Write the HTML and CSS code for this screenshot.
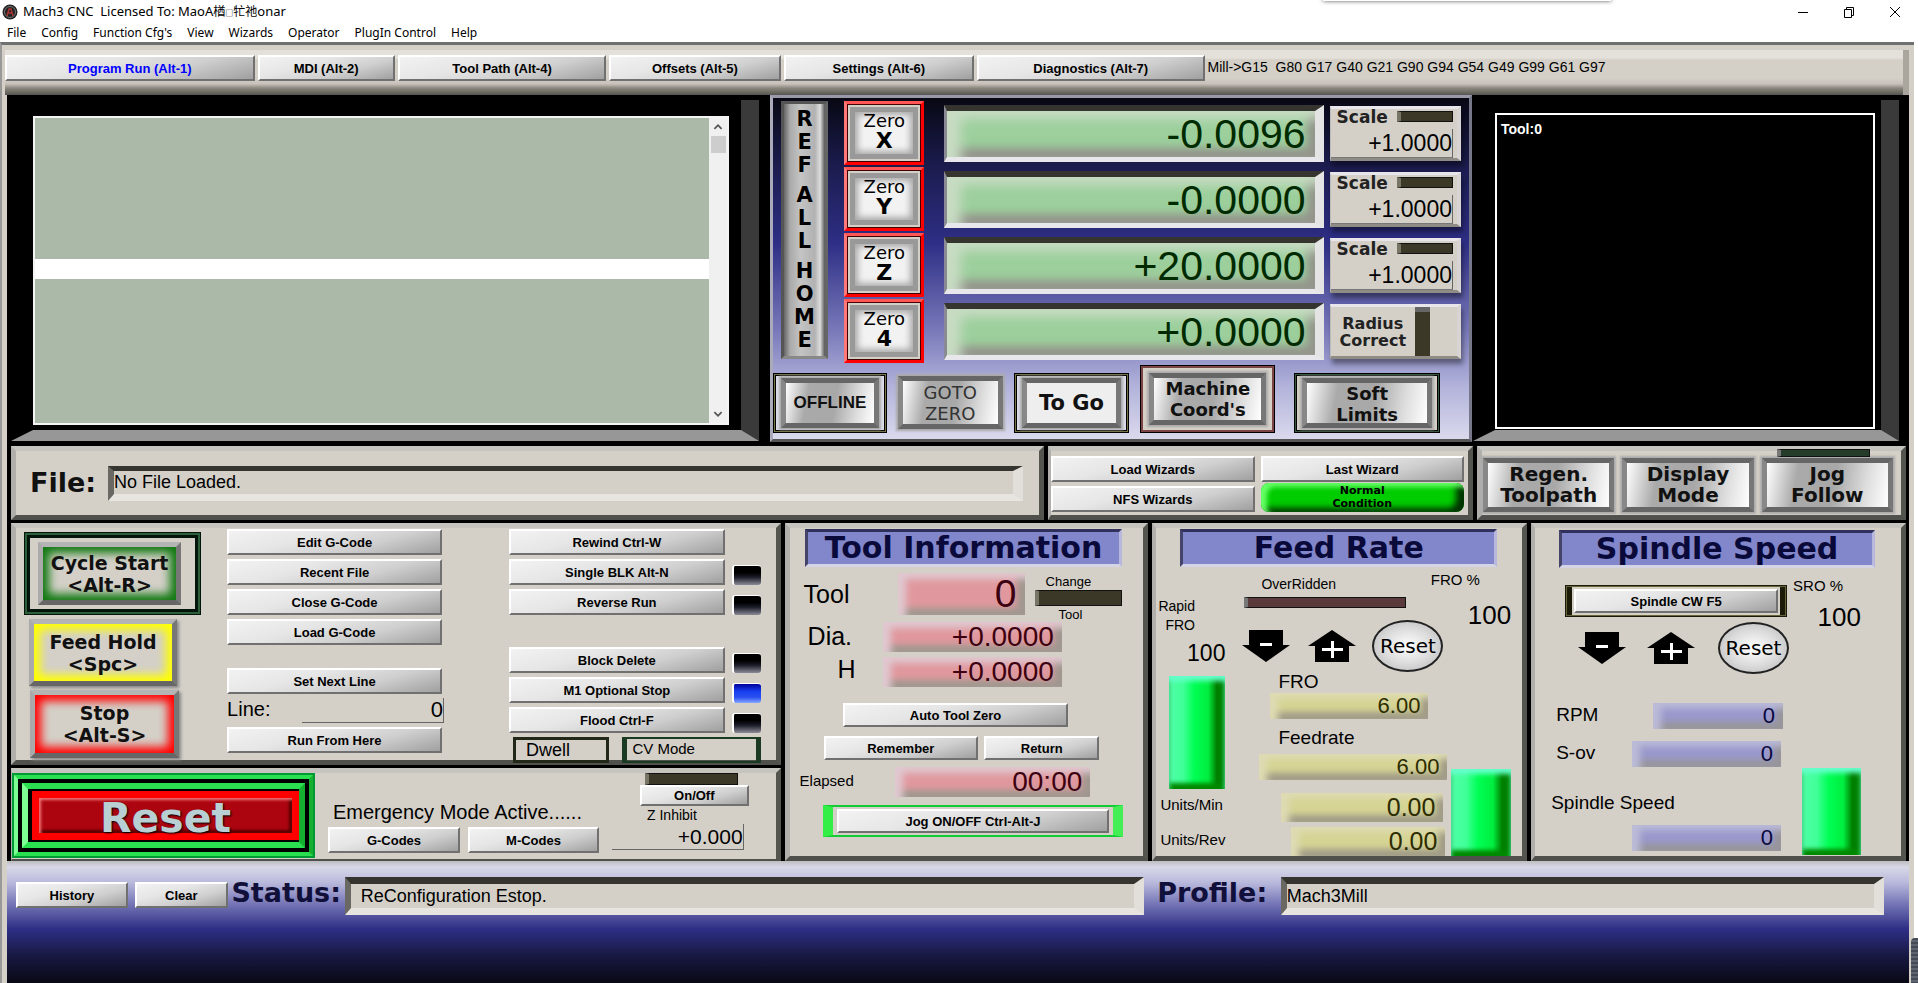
FILE: index.html
```html
<!DOCTYPE html>
<html lang="en">
<head>
<meta charset="utf-8">
<title>Mach3 CNC</title>
<link rel="stylesheet" href="styles.css">
</head>
<body>
<header class="titlebar">
  <svg class="app-icon" viewBox="0 0 16 16" aria-hidden="true"><circle cx="8" cy="8" r="7.500" fill="#222"/><circle cx="8" cy="8" r="5.500" fill="none" stroke="#777" stroke-width="1"/><path d="M5 12 7 5h2l2 7M6 9h4" fill="none" stroke="#a33" stroke-width="1.500"/></svg>
  <h1 class="app-title">Mach3 CNC&nbsp; Licensed To: MaoA<span class="owner">楢<small>□</small>牤祂</span>onar</h1>
  <span class="drop-shade"></span>
  <div class="window-buttons">
    <button class="win" aria-label="Minimize"><svg viewBox="0 0 12 12"><path d="M1 6.500h10"/></svg></button>
    <button class="win" aria-label="Restore"><svg viewBox="0 0 12 12"><path d="M1.500 3.500h7v8h-7zM3.500 3.500v-2h7v8h-2"/></svg></button>
    <button class="win" aria-label="Close"><svg viewBox="0 0 12 12"><path d="M1 1l10 10M11 1 1 11"/></svg></button>
  </div>
</header>
<nav class="menubar">
  <button>File</button><button>Config</button><button>Function Cfg's</button><button>View</button><button>Wizards</button><button>Operator</button><button>PlugIn Control</button><button>Help</button>
</nav>

<main class="client">
  <div class="tabs">
    <button class="btn tab t1 active">Program Run (Alt-1)</button>
    <button class="btn tab t2">MDI (Alt-2)</button>
    <button class="btn tab t3">Tool Path (Alt-4)</button>
    <button class="btn tab t4">Offsets (Alt-5)</button>
    <button class="btn tab t5">Settings (Alt-6)</button>
    <button class="btn tab t6">Diagnostics (Alt-7)</button>
    <span class="modes">Mill-&gt;G15&nbsp; G80 G17 G40 G21 G90 G94 G54 G49 G99 G61 G97</span>
  </div>

  <section class="upper">
    <div class="bezel code-bezel">
      <div class="code">
        <div class="listing"><div class="current-line"></div></div>
        <div class="scrollbar">
          <svg viewBox="0 0 16 20"><path d="M4 12l4-4 4 4"/></svg>
          <span class="thumb"></span>
          <svg class="down" viewBox="0 0 16 20"><path d="M4 8l4 4 4-4"/></svg>
        </div>
      </div>
    </div>

    <div class="axes">
      <div class="axis-grid">
        <button class="ref" aria-label="Ref all home"><span>R</span><span>E</span><span>F</span><span class="word">A</span><span>L</span><span>L</span><span class="word">H</span><span>O</span><span>M</span><span>E</span></button>
        <button class="zero r1">Zero<b>X</b></button>
        <button class="zero r2">Zero<b>Y</b></button>
        <button class="zero r3">Zero<b>Z</b></button>
        <button class="zero r4">Zero<b>4</b></button>
        <input class="dro axis r1" aria-label="X position" value="-0.0096">
        <input class="dro axis r2" aria-label="Y position" value="-0.0000">
        <input class="dro axis r3" aria-label="Z position" value="+20.0000">
        <input class="dro axis r4" aria-label="A position" value="+0.0000">
        <div class="scale r1"><label for="sx">Scale</label><span class="led-bar"></span><input id="sx" value="+1.0000"></div>
        <div class="scale r2"><label for="sy">Scale</label><span class="led-bar"></span><input id="sy" value="+1.0000"></div>
        <div class="scale r3"><label for="sz">Scale</label><span class="led-bar"></span><input id="sz" value="+1.0000"></div>
        <div class="radius r4"><span>Radius<br>Correct</span><span class="led-tall"></span></div>
      </div>
      <div class="axis-buttons">
        <div class="ring olive"><button class="chrome offline">OFFLINE</button></div>
        <button class="chrome goto">GOTO<br>ZERO</button>
        <div class="ring olive"><button class="chrome togo">To Go</button></div>
        <div class="ring brown"><button class="chrome">Machine<br>Coord's</button></div>
        <div class="ring green"><button class="chrome">Soft<br>Limits</button></div>
      </div>
    </div>

    <div class="bezel path-bezel"><div class="toolpath">Tool:0</div></div>
  </section>

  <section class="middle">
    <div class="panel file-panel"><label class="wide-label file-label" for="file">File:</label><input id="file" class="sunken" value="No File Loaded."></div>
    <div class="panel wizards">
      <button class="btn">Load Wizards</button><button class="btn">Last Wizard</button>
      <button class="btn">NFS Wizards</button><div class="condition">Normal<br>Condition</div>
    </div>
    <div class="panel view-panel">
      <button class="chrome">Regen.<br>Toolpath</button><button class="chrome">Display<br>Mode</button><button class="chrome">Jog<br>Follow</button>
      <span class="follow-led"></span>
    </div>
  </section>

  <section class="lower">
    <div class="left-stack">
      <div class="panel run-panel">
        <div class="run-buttons">
          <div class="cycle-ring"><button class="glow cycle">Cycle Start<br>&lt;Alt-R&gt;</button></div>
          <button class="glow hold">Feed Hold<br>&lt;Spc&gt;</button>
          <button class="glow stop">Stop<br>&lt;Alt-S&gt;</button>
        </div>
        <div class="file-buttons">
          <button class="btn">Edit G-Code</button>
          <button class="btn">Recent File</button>
          <button class="btn">Close G-Code</button>
          <button class="btn">Load G-Code</button>
          <button class="btn next">Set Next Line</button>
          <div class="line-row"><label for="line">Line:</label><input id="line" class="plain" value="0"></div>
          <button class="btn">Run From Here</button>
        </div>
        <div class="mode-buttons">
          <button class="btn">Rewind Ctrl-W</button>
          <button class="btn">Single BLK Alt-N</button><span class="led"></span>
          <button class="btn">Reverse Run</button><span class="led"></span>
          <button class="btn block">Block Delete</button><span class="led block"></span>
          <button class="btn">M1 Optional Stop</button><span class="led on"></span>
          <button class="btn">Flood Ctrl-F</button><span class="led"></span>
          <div class="mode-flags"><span class="flag dwell">Dwell</span><span class="flag cv">CV Mode</span></div>
        </div>
      </div>
      <div class="panel reset-panel">
        <div class="reset-outer"><div class="reset-inner"><button class="reset">Reset</button></div></div>
        <div class="emergency">
          <p>Emergency Mode Active......</p>
          <div class="codes"><button class="btn">G-Codes</button><button class="btn">M-Codes</button></div>
        </div>
        <div class="inhibit">
          <span class="led-bar"></span>
          <button class="btn">On/Off</button>
          <label for="zin">Z Inhibit</label>
          <input id="zin" class="plain" value="+0.000">
        </div>
      </div>
    </div>

    <div class="panel tool-panel">
      <h2 class="banner">Tool Information</h2>
      <div class="tool-row"><label for="tool">Tool</label><input id="tool" class="dro red big" value="0"><div class="change">Change<span class="led-bar"></span><span>Tool</span></div></div>
      <div class="size-row"><label for="dia">Dia.</label><input id="dia" class="dro red" value="+0.0000"></div>
      <div class="size-row h-row"><label for="hh">H</label><input id="hh" class="dro red" value="+0.0000"></div>
      <button class="btn auto-zero">Auto Tool Zero</button>
      <div class="remember-row"><button class="btn">Remember</button><button class="btn">Return</button></div>
      <div class="elapsed-row"><label for="elapsed">Elapsed</label><input id="elapsed" class="dro red" value="00:00"></div>
      <div class="jog-ring"><button class="btn">Jog ON/OFF Ctrl-Alt-J</button></div>
    </div>

    <div class="panel feed-panel">
      <h2 class="banner">Feed Rate</h2>
      <div class="feed-body">
        <div class="rapid">
          <p class="small">Rapid<br><span>FRO</span></p>
          <p class="percent">100</p>
          <div class="level tall"></div>
          <label class="unit" for="umin">Units/Min</label>
          <label class="unit rev" for="urev">Units/Rev</label>
        </div>
        <div class="feed-main">
          <p class="over">OverRidden</p>
          <span class="over-led"></span>
          <div class="adjust">
            <button class="arrow" aria-label="Decrease feed rate"><svg viewBox="0 0 48 34"><path d="M7 1h34v15h7L24 33 0 16h7z"/><path class="sign" d="M18 14h12v3H18z"/></svg></button>
            <button class="arrow" aria-label="Increase feed rate"><svg viewBox="0 0 48 34"><path d="M24 1 48 17h-7v16H7V17H0z"/><path class="sign" d="M14 19h9v-7h3v7h9v3h-9v7h-3v-7h-9z"/></svg></button>
            <button class="round">Reset</button>
          </div>
          <label class="fro" for="fro">FRO</label>
          <input id="fro" class="dro yellow fro-value" value="6.00">
          <label class="feedrate" for="feedrate">Feedrate</label>
          <input id="feedrate" class="dro yellow rate-value" value="6.00">
          <input id="umin" class="dro yellow min-value" value="0.00">
          <input id="urev" class="dro yellow rev-value" value="0.00">
        </div>
        <div class="override">
          <p class="small">FRO %</p><p class="hundred">100</p><div class="level"></div>
        </div>
      </div>
    </div>

    <div class="panel spindle-panel">
      <h2 class="banner">Spindle Speed</h2>
      <div class="spindle-body">
        <div class="spindle-main">
          <div class="spindle-ring"><button class="btn">Spindle CW F5</button></div>
          <div class="adjust">
            <button class="arrow" aria-label="Decrease spindle speed"><svg viewBox="0 0 48 34"><path d="M7 1h34v15h7L24 33 0 16h7z"/><path class="sign" d="M18 14h12v3H18z"/></svg></button>
            <button class="arrow" aria-label="Increase spindle speed"><svg viewBox="0 0 48 34"><path d="M24 1 48 17h-7v16H7V17H0z"/><path class="sign" d="M14 19h9v-7h3v7h9v3h-9v7h-3v-7h-9z"/></svg></button>
            <button class="round">Reset</button>
          </div>
          <div class="speed-row rpm"><label for="rpm">RPM</label><input id="rpm" class="dro blue" value="0"></div>
          <div class="speed-row"><label for="sov">S-ov</label><input id="sov" class="dro blue" value="0"></div>
          <label class="speed-label" for="speed">Spindle Speed</label>
          <div class="speed-row last"><input id="speed" class="dro blue" value="0"></div>
        </div>
        <div class="override">
          <p class="small">SRO %</p><p class="hundred">100</p><div class="level"></div>
        </div>
      </div>
    </div>
  </section>

  <footer class="status">
    <button class="btn history">History</button>
    <button class="btn clear">Clear</button>
    <label class="wide-label" for="status">Status:</label>
    <input id="status" class="sunken status-field" value="ReConfiguration Estop.">
    <label class="wide-label profile-label" for="profile">Profile:</label>
    <input id="profile" class="sunken profile-field" value="Mach3Mill">
  </footer>
</main>
<span class="edge-meter"></span>
</body>
</html>
```
FILE: styles.css
```css
* { box-sizing: border-box; }
body {
  margin: 0;
  min-height: 100vh;
  display: flex;
  flex-direction: column;
  background: #fff;
  color: #000;
  font-family: "Liberation Sans", "Noto Sans CJK SC", sans-serif;
}
button, input { font-family: inherit; color: inherit; margin: 0; padding: 0; min-width: 0; border-radius: 0; }
button { border: 0; background: none; white-space: nowrap; }
p, h1, h2 { margin: 0; font-weight: normal; white-space: nowrap; }
label { white-space: nowrap; }

/* window chrome */
.titlebar { display: flex; align-items: center; height: 23px; padding-left: 2px; position: relative; }
.app-icon { width: 16px; height: 16px; margin-right: 5px; }
.app-title { font: 13px/20px "Noto Sans", "Noto Sans CJK SC", sans-serif; }
.owner { font-size: 12px; }
.owner small { font-size: 8px; font-weight: bold; }
.drop-shade { position: absolute; top: -3px; left: 69%; width: 15%; height: 4px; box-shadow: 0 0 4px #555; }
.window-buttons { display: flex; margin-left: auto; }
.win { width: 46px; height: 20px; }
.win svg { width: 12px; height: 12px; fill: none; stroke: #000; stroke-width: 1; display: block; margin: auto; }
.menubar { display: flex; gap: 15px; height: 18px; padding-left: 7px; }
.menubar button { font: 12px/20px "Noto Sans", sans-serif; }
.edge-meter { position: fixed; right: 0; bottom: 0; width: 7px; height: 45px; border-radius: 4px 0 0 0; background: repeating-linear-gradient(#444b55 0 2px, #5c6570 2px 4px); }

.client {
  flex: 1;
  display: flex;
  flex-direction: column;
  margin-top: 1px;
  margin-right: 4px;
  border-left: 2px solid #999;
  border-top: 3px solid #6e7070;
  padding: 5px 5px 0 5px;
  background: #d4d0c8;
}

/* plain push button */
.btn {
  height: 26px;
  font-size: 13px;
  font-weight: bold;
  background: linear-gradient(165deg, #f2f2f2 0%, #e6e6e6 35%, #cfcfcf 65%, #a0a0a0 100%);
  border: 2px solid;
  border-color: #fff #707070 #707070 #fff;
}
.tabs {
  display: flex;
  align-items: flex-start;
  height: 45px;
  margin-left: -2px;
  padding-top: 5px;
  background: linear-gradient(#e4e0da 0, #e4e0da 8px, #d4d0c8 10px, #d4d0c8 28px, #c8c0ba 34px, #8c8880 38px, #66645c 43px, #555 45px);
  border-right: 6px solid #aaa69e;
}
.tab { margin-right: 3px; flex-basis: 0; }
.t1 { flex-grow: 245; } .t2 { flex-grow: 133; } .t3 { flex-grow: 204; }
.t4 { flex-grow: 167; } .t5 { flex-grow: 186; } .t6 { flex-grow: 223; }
.active { color: #00f; }
.modes { flex: 694 1 0; font-size: 14px; line-height: 24px; white-space: pre; }

/* displays and axes */
.upper { display: grid; grid-template-columns: 763fr 702fr 437fr; min-height: 350px; background: #000; }
.bezel {
  display: flex;
  margin: 5px 11px 4px 4px;
  border: solid;
  border-width: 0 18px 11px 22px;
  border-color: #000 #3a3a3a #979797 #000;
}
.code { flex: 1; display: flex; border: 2px solid #f4f4f4; margin: 16px 12px 5px 0; }
.listing { flex: 1; background: #abbaa8; padding-top: 141px; }
.current-line { height: 20px; background: #fff; }
.scrollbar { width: 18px; background: #f0f0f0; display: flex; flex-direction: column; align-items: center; }
.scrollbar svg { width: 16px; height: 18px; fill: none; stroke: #555; stroke-width: 2; }
.thumb { width: 15px; height: 17px; background: #cdcdcd; }
.down { margin-top: auto; }
.path-bezel { margin-right: 10px; margin-left: 1px; }
.toolpath { flex: 1; margin: 13px 6px 1px 0; border: 2px solid #fff; color: #fff; font-weight: bold; font-size: 14px; line-height: 18px; padding: 5px 4px; }

.axes {
  display: flex;
  flex-direction: column;
  margin-bottom: 3px;
  padding-left: 8px;
  border: 3px solid #777;
  border-color: #99a #77778a #555 #aab;
  background: linear-gradient(#080814 0, #1c1c50 70px, #2e2e86 145px, #7676b8 230px, #b4b4dc 290px, #dcdcee 345px);
}
.axis-grid {
  display: grid;
  grid-template-columns: 47fr 16fr 80fr 20fr 378fr 6fr 131fr 8fr;
  grid-template-rows: repeat(4, 66px);
  padding-top: 3px;
}
.r1 { grid-row: 1; } .r2 { grid-row: 2; } .r3 { grid-row: 3; } .r4 { grid-row: 4; }
.ref {
  grid-row: 1 / 5;
  height: 258px;
  display: flex;
  flex-direction: column;
  align-items: center;
  justify-content: center;
  font: bold 21px/23px "DejaVu Sans", sans-serif;
  background: linear-gradient(90deg, #666, #aaa 15%, #c4c4c4 40%, #b2b2b2 75%, #ddd 88%, #555);
  border: 3px solid #666;
  border-color: #555 #666 #888 #555;
}
.ref .word { margin-top: 7px; }
.zero {
  grid-column: 3;
  height: 64px;
  font: 18px/18px "DejaVu Sans", sans-serif;
  padding-bottom: 3px;
  border: 3px solid #f00;
  border-top-color: #f55;
  border-left-color: #f77;
  outline: 1px solid #400;
  outline-offset: -4px;
  background: #f2f2f2;
  box-shadow: inset 0 0 0 3px #d4d0c8, inset 0 0 0 8px #999, inset 0 0 6px 11px #aaa;
}
.zero b { display: block; font-size: 22px; line-height: 22px; }

.dro {
  width: 100%;
  text-align: right;
  border: 0;
  padding-right: 8px;
  font-size: 24px;
}
.axis {
  grid-column: 5;
  height: 57px;
  margin-top: 4px;
  font-size: 41px;
  color: #002a00;
  padding-right: 9px;
  border: solid;
  border-width: 6px 9px 5px 3px;
  border-color: #35342f #e4e4e4 #e8e8ec #8a8a94;
  background: #9ccf9c;
  box-shadow: inset 14px 8px 12px #c8dcc4, inset -8px -9px 8px #94948c;
}
.scale, .radius {
  grid-column: 7;
  height: 55px;
  margin-top: 5px;
  background: #d4d0c8;
  border: 4px solid;
  border-width: 3px 4px 3px 1px;
  border-color: #e8e6ea #d8d4d4 #8f8c86 #bbb;
  box-shadow: 2px 5px 5px rgba(0, 0, 0, .4);
  display: grid;
  grid-template-columns: 1fr 56px;
  grid-template-rows: 20px 29px;
  padding-right: 4px;
}
.scale label { font: bold 17px/16px "DejaVu Sans", sans-serif; padding-left: 6px; color: #222; }
.scale input { grid-column: 1 / 3; width: 100%; border: 0; border-right: 1px solid #666; border-bottom: 1px solid #777; background: none; text-align: right; font-size: 23px; }
.led-bar { display: block; height: 12px; background: #3c3828; border: 1px solid #111; border-left: 4px solid #777566; }
.scale .led-bar { margin-top: 2px; height: 11px; }
.radius { grid-template-rows: 1fr; grid-template-columns: 1fr 15px; align-items: center; padding-right: 27px; font: bold 16px/17px "DejaVu Sans", sans-serif; text-align: center; color: #222; }
.led-tall { height: 49px; background: #3c3828; border-top: 5px solid #666; }

.axis-buttons {
  display: grid;
  grid-template-columns: 114fr 105fr 116fr 135fr 154fr;
  gap: 11px;
  align-items: end;
  height: 68px;
  margin: 0 29px 0 -8px;
}
.ring { display: flex; height: 60px; padding: 2px 5px; border: 3px solid #000; background: #dcdce8; }
.ring .chrome { flex: 1; }
.olive { outline: 1px solid #77744a; outline-offset: -2px; }
.brown { height: 68px; padding: 5px 6px; background: #d4d0c8; outline: 2px solid #7c4444; outline-offset: -3px; }
.green { background: #d4d0c8; outline: 1px solid #37593f; outline-offset: -2px; margin-left: 8px; }
.chrome {
  font: bold 18px/21px "DejaVu Sans", sans-serif;
  color: #111;
  border: 5px solid;
  border-color: #666 #777 #666 #888;
  background: linear-gradient(100deg, #fff, #aaa 25%, #a8a8a8 55%, #ddd 80%, #fff);
  box-shadow: 0 0 2px 2px #aaa;
}
.offline { font: bold 17px/22px "Liberation Sans", sans-serif; }
.goto { height: 53px; margin-bottom: 4px; font-weight: normal; color: #333; }
.ring .togo { font-size: 21px; background: #eee; }

/* raised grey panels */
.panel {
  min-width: 0;
  background: #d4d0c8;
  border: 5px solid;
  border-color: #c6c4be #55554f #50504c #b0afac;
}
.middle { display: grid; grid-template-columns: 1033fr 425fr 429fr; gap: 4px; padding: 1px 3px 3px 4px; background: #000; }
.wide-label { font: bold 27px/30px "DejaVu Sans", sans-serif; color: #111; }
.file-panel { display: flex; align-items: center; padding: 0 16px 0 14px; }
.file-label { flex: none; width: 78px; }
.sunken {
  width: 100%;
  height: 35px;
  font-size: 18px;
  background: #d4d0c8;
  border: solid;
  border-width: 5px 10px 7px 6px;
  border-color: #35342f #e2dfda #e8e4e0 #6a6862;
}
.wizards { display: grid; grid-template-columns: 1fr 1fr; grid-template-rows: 26px 26px; gap: 4px 6px; padding: 5px 4px 3px 0; border-left-width: 3px; }
.condition {
  height: 29px;
  margin-top: -3px;
  border-radius: 8px;
  background: #0c0;
  box-shadow: inset 6px 4px 5px #6f6, inset -8px -4px 6px #030;
  font: bold 11px/13px "DejaVu Sans", sans-serif;
  padding-top: 1px;
  text-align: center;
}
.view-panel { display: grid; grid-template-columns: repeat(3, 1fr); gap: 8px; padding: 7px 8px 3px 1px; position: relative; }
.view-panel .chrome { height: 54px; font-size: 20px; }
.follow-led { position: absolute; top: -2px; right: 31px; width: 93px; height: 8px; background: #263c2a; border: 1px solid #111; border-left: 4px solid #777; }

/* lower area */
.lower {
  display: grid;
  grid-template-columns: minmax(0, 770fr) minmax(0, 364fr) minmax(0, 375fr) minmax(0, 375fr);
  gap: 4px;
  padding: 0 3px 0 4px;
  background: #000;
  min-height: 338px;
}
.left-stack { display: flex; flex-direction: column; gap: 3px; }
.run-panel { display: grid; grid-template-columns: 178fr 218fr 292fr; column-gap: 26px; padding: 1px 15px 0 8px; height: 242px; }
.run-buttons { display: flex; flex-direction: column; padding-top: 3px; gap: 4px; }
.cycle-ring { height: 83px; padding: 4px 14px 4px 8px; border: 6px solid #03150a; outline: 2px solid #2c5f3a; outline-offset: -3px; display: flex; }
.glow {
  font: bold 19px/22px "DejaVu Sans", sans-serif;
  color: #111;
  background: #d4d0c8;
  border: 5px solid;
  border-color: #b4b4b4 #777 #666 #aaa;
}
.cycle { flex: 1; box-shadow: inset 0 0 10px 6px #107810; }
.hold { height: 67px; margin: 0 24px 0 5px; box-shadow: inset 0 0 10px 6px #ff0, 2px 2px 3px #888; }
.stop { height: 68px; margin: 0 22px 0 6px; box-shadow: inset 0 0 10px 6px #f00, 2px 2px 3px #888; }
.file-buttons { display: flex; flex-direction: column; gap: 4px; }
.file-buttons .btn { margin-right: 2px; }
.file-buttons .next { margin-top: 19px; }
.line-row { display: flex; height: 25px; gap: 32px; font-size: 20px; line-height: 22px; }
.plain { width: 100%; background: none; border: 0; border-right: 1px solid #666; border-bottom: 1px solid #666; text-align: right; font-size: 21px; }
.line-row .plain { font-size: 22px; }
.mode-buttons {
  display: grid;
  grid-template-columns: 216fr 29fr;
  grid-template-rows: 26px 26px 26px 54px 26px 26px 26px;
  gap: 4px 7px;
  align-content: start;
  margin-left: 39px;
}
.mode-buttons .btn { grid-column: 1; }
.led { height: 20px; align-self: end; border: 1px solid #fff; border-width: 1px 0 0 2px; border-radius: 3px; background: linear-gradient(#000 0 35%, #1c1e2a 60%, #8c8c98); }
.led.on { background: linear-gradient(#00009a, #1840f0 40%, #2a50f0 70%, #88a8ff); }
.block { margin-top: 28px; }
.mode-flags { grid-column: 1 / 3; display: grid; grid-template-columns: 97fr 139fr; gap: 13px; padding-left: 4px; }
.flag { height: 26px; border: 3px solid #222818; line-height: 20px; }
.dwell { font-size: 18px; padding-left: 10px; }
.cv { font-size: 15px; border-width: 2px 5px; border-color: #1b3a22; padding-left: 5px; }

.reset-panel { flex: 1; display: grid; grid-template-columns: 304fr 272fr 132fr; padding: 0 32px 0 0; border-left-width: 1px; border-bottom-width: 2px; column-gap: 13px; }
.reset-outer, .reset-inner { display: flex; border: 6px solid #2be050; border-color: #2be050 #15b030 #2be050 #7dff96; }
.reset-outer { height: 85px; background: #000; padding: 4px; outline: 2px solid #093; outline-offset: -2px; }
.reset-inner { flex: 1; }
.reset { flex: 1; margin: 2px 0 2px 4px; border: 7px solid #f00; background: #ad0510; box-shadow: inset 2px 2px 3px #e77, inset -3px -3px 3px #500; font: bold 41px/40px "DejaVu Sans", sans-serif; color: #b8d0d4; text-shadow: 1px 1px 2px #000; }
.emergency { padding-top: 27px; }
.emergency p { font-size: 20px; line-height: 24px; padding-left: 5px; }
.codes { display: grid; grid-template-columns: 132fr 131fr; gap: 8px; margin-top: 3px; }
.inhibit { display: flex; flex-direction: column; }
.inhibit .led-bar { width: 93px; margin-left: 33px; }
.inhibit .btn { height: 21px; margin: 0 -5px 0 28px; }
.inhibit label { font-size: 14px; line-height: 18px; padding-left: 35px; }
.inhibit .plain { height: 26px; }

.banner {
  height: 38px;
  font: bold 30px/32px "DejaVu Sans", sans-serif;
  color: #0a0a3a;
  text-align: center;
  background: #8286ca;
  border: 3px solid;
  border-color: #30305c #b8b8dc #d4d4e4 #44446a;
}
.red { background: #e0989e; color: #3c0010; box-shadow: inset 8px 6px 7px #e0c8d0, inset -8px -7px 6px #a09890; }
.yellow { background: #d6d494; color: #2c2c00; font-size: 22px; box-shadow: inset 8px 5px 7px #dedbb4, inset -7px -7px 6px #a09c88; }
.blue { background: #9a98cc; color: #08083c; font-size: 22px; box-shadow: inset 8px 5px 7px #bcbcd8, inset -7px -7px 6px #98969a; }

.tool-panel { display: flex; flex-direction: column; padding: 1px 21px 0 10px; }
.tool-panel .banner { margin: 0 0 0 5px; }
.tool-row { display: grid; grid-template-columns: 94fr 125fr 10fr 87fr; grid-template-rows: 42px; margin: 6px 0 0 4px; font-size: 25px; line-height: 42px; }
.tool-row .big { height: 42px; font-size: 39px; }
.change { grid-column: 4; font-size: 13px; line-height: 17px; padding-left: 11px; }
.change .led-bar { height: 16px; margin-left: -11px; }
.change span:last-child { padding-left: 13px; }
.size-row { display: grid; grid-template-columns: 79fr 173fr 60fr; margin: 7px 0 0 8px; font-size: 25px; line-height: 28px; }
.size-row .dro, .elapsed-row .dro { height: 30px; font-size: 28px; }
.size-row .dro { width: auto; margin-left: -4px; }
.size-row + .size-row { margin-top: 5px; line-height: 24px; }
.h-row label { padding-left: 30px; }
.auto-zero { height: 24px; margin: 16px 54px 0 43px; }
.remember-row { display: grid; grid-template-columns: 154fr 115fr; gap: 6px; margin: 9px 23px 0 24px; }
.remember-row .btn { height: 24px; }
.elapsed-row { display: grid; grid-template-columns: 95fr 195fr 32fr; margin-top: 7px; font-size: 15px; line-height: 28px; }
.jog-ring { display: flex; height: 32px; margin: 8px -1px 0 23px; padding: 2px 4px; border: 2px solid #1c3; border-width: 2px 10px; border-color: #1c3 #4e5 #1c3 #3e4; }
.jog-ring .btn { flex: 1; height: 24px; }

.feed-panel, .spindle-panel { padding-top: 1px; border-left-width: 4px; }
.feed-panel .banner { margin: 0 25px 0 24px; }
.feed-body { display: grid; grid-template-columns: 86fr 206fr 74fr; height: 288px; }
.rapid { display: flex; flex-direction: column; padding: 30px 19px 0 2px; }
.small { font-size: 14px; line-height: 19px; }
.small span { padding-left: 7px; }
.percent { font-size: 23px; line-height: 36px; text-align: right; }
.level { background: linear-gradient(90deg, #50ffa8, #40ff98 25%, #00ff54 45%, #00ee40 70%, #008000 85%); box-shadow: inset 0 5px 5px #6fc, inset 0 -6px 4px #080; }
.rapid .tall { height: 113px; margin: 5px 0 6px 11px; }
.unit { font-size: 15px; line-height: 20px; padding-left: 2px; }
.unit.rev { margin-top: 15px; }
.feed-main { display: flex; flex-direction: column; align-items: flex-start; padding-top: 9px; }
.over { font-size: 14px; line-height: 16px; padding-left: 17px; }
.over-led { width: 162px; height: 11px; margin-top: 5px; background: #5a3a3a; border: 1px solid #111; border-left: 4px solid #777; }
.adjust { display: flex; align-items: center; margin-top: 12px; height: 52px; }
.feed-main .adjust { margin-left: -2px; }
.arrow { width: 48px; height: 34px; margin-right: 18px; }
.arrow svg { width: 48px; height: 34px; display: block; }
.arrow .sign { fill: #fff; }
.round { width: 71px; height: 52px; margin-left: -2px; border: 2px solid #222; border-radius: 50%; background: radial-gradient(#fff, #ddd 50%, #b4b4b4); font: 20px/20px "DejaVu Sans", sans-serif; }
.feed-main label { font-size: 19px; line-height: 19px; padding-left: 34px; }
.feed-main .fro-value { width: 158px; height: 26px; margin: 2px 0 0 26px; }
.feed-main .feedrate { margin-top: 9px; }
.feed-main .rate-value { width: 188px; height: 26px; margin: 7px 0 0 15px; }
.feed-main .min-value { width: 162px; height: 29px; margin: 13px 0 0 37px; font-size: 25px; }
.feed-main .rev-value { width: 154px; height: 29px; margin: 5px 0 0 47px; font-size: 25px; }
.override { display: flex; flex-direction: column; padding: 3px 11px 0 2px; }
.feed-body .override .small { margin-left: -20px; font-size: 15px; }
.hundred { font-size: 26px; line-height: 28px; margin-top: 12px; text-align: right; }
.override .level { height: 87px; margin: auto 0 0; }

.spindle-panel .banner { margin: 1px 26px 0 24px; }
.spindle-body {
  display: grid;
  grid-template-columns: minmax(0, 238fr) minmax(0, 84fr) minmax(0, 28fr);
  height: 287px;
  padding-left: 16px;
}
.spindle-main { display: flex; flex-direction: column; padding-top: 17px; }
.spindle-ring { display: flex; height: 32px; margin: 0 2px 0 14px; padding: 2px; border: 2px solid #1c1a08; border-width: 2px 7px; outline: 1px solid #666438; outline-offset: -2px; }
.spindle-ring .btn { flex: 1; height: 24px; }
.spindle-main .adjust { margin: 5px 0 0 27px; }
.spindle-main .arrow { margin-right: 23px; }
.spindle-main .round { flex: none; margin-left: 2px; }
.speed-row { display: grid; grid-template-columns: 76fr 149fr; margin: 12px 8px 0 5px; font-size: 19px; line-height: 24px; }
.rpm { grid-template-columns: 97fr 130fr; margin-top: 29px; margin-right: 6px; }
.last .dro { grid-column: 2; }
.spindle-main .dro { height: 26px; }
.speed-label { font-size: 19px; line-height: 20px; margin-top: 26px; }
.spindle-body .override { padding: 8px 12px 0 4px; }
.spindle-body .small { font-size: 15px; }
.spindle-body .hundred { margin-top: 8px; }
.spindle-body .level { margin-left: 9px; }

.status {
  flex: 1;
  display: flex;
  align-items: flex-start;
  min-height: 120px;
  padding: 16px 25px 0 9px;
  background: linear-gradient(#bcbcc0 0, #d8d8e8 6px, #b8b8dc 22px, #7878b8 42px, #2e2e86 68px, #191944 94px, #080814 122px);
}
.status .btn { flex: 89 1 0; margin: 5px 0 0; }
.status .history { flex: 108 1 0; margin-right: 7px; }
.status .wide-label { flex: 117 1 0; text-align: center; line-height: 32px; color: #10103a; }
.status .sunken { height: 38px; border-top-width: 7px; }
.status .status-field { flex: 774 1 0; padding-left: 10px; }
.status .profile-label { flex: 137 1 0; }
.status .profile-field { flex: 588 1 0; }
```
